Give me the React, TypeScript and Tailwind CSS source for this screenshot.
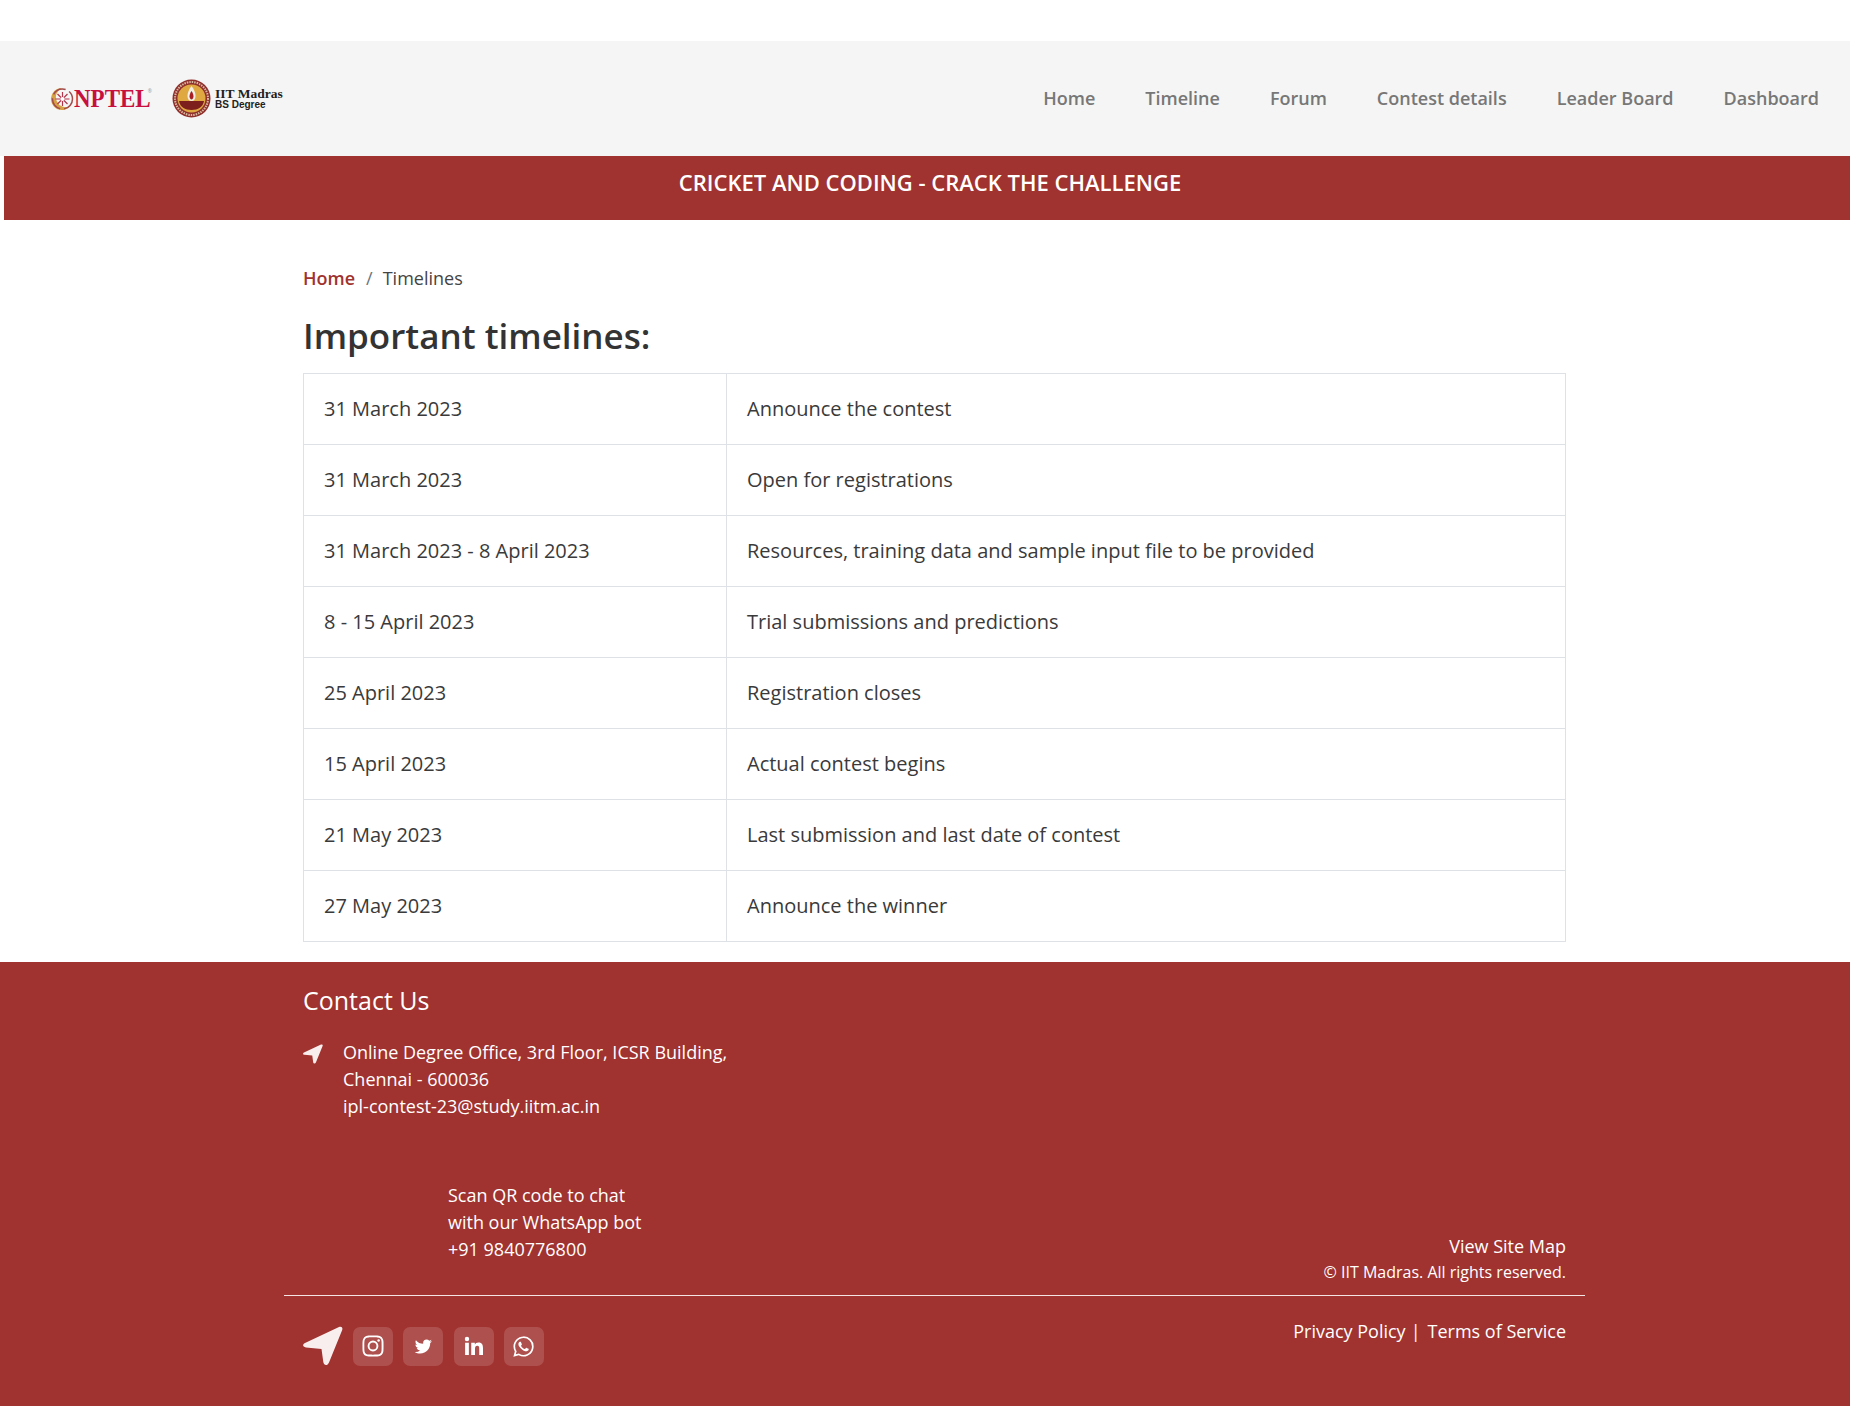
import React from 'react';
import {
  BiLogoInstagram,
  BiLogoTwitter,
  BiLogoLinkedin,
  BiLogoWhatsapp,
} from 'react-icons/bi';

const rows = [
  ['31 March 2023', 'Announce the contest'],
  ['31 March 2023', 'Open for registrations'],
  ['31 March 2023 - 8 April 2023', 'Resources, training data and sample input file to be provided'],
  ['8 - 15 April 2023', 'Trial submissions and predictions'],
  ['25 April 2023', 'Registration closes'],
  ['15 April 2023', 'Actual contest begins'],
  ['21 May 2023', 'Last submission and last date of contest'],
  ['27 May 2023', 'Announce the winner'],
];

const navLinks = ['Home', 'Timeline', 'Forum', 'Contest details', 'Leader Board', 'Dashboard'];

const socials = [
  { icon: BiLogoInstagram, size: 'h-[28px] w-[28px]' },
  { icon: BiLogoTwitter, size: 'h-[21px] w-[21px]' },
  { icon: BiLogoLinkedin, size: 'h-[24px] w-[24px]' },
  { icon: BiLogoWhatsapp, size: 'h-[27px] w-[27px]' },
];

function NavArrow({ className }: { className: string }) {
  return (
    <svg viewBox="0 0 40 40" className={className} fill="currentColor">
      <path d="M36 1C38.500.2 40 1.500 39.200 4L26 36.500C24.500 40 21 40 20.300 36L18.500 23 3 21.500C-.5 21-.8 18.500 2 17Z" />
    </svg>
  );
}

function NptelMark() {
  return (
    <svg width="24" height="24" viewBox="0 0 24 24" className="shrink-0">
      <path d="M12 1a11 11 0 1 0 8 18.500A10 10 0 1 1 12 1z" fill="#d6a045" />
      <circle cx="12.500" cy="12" r="10" fill="none" stroke="#a34a4a" strokeWidth="1.500" strokeDasharray="14 4" />
      <g stroke="#b5354a" strokeWidth="1.200">
        <path d="M12.500 5v14M5.500 12h14M7.500 7l10 10M17.500 7l-10 10" />
      </g>
      <circle cx="12.500" cy="12" r="2" fill="#fff" />
    </svg>
  );
}

function IitmMark() {
  return (
    <svg width="39" height="39" viewBox="0 0 39 39" className="shrink-0">
      <circle cx="19.500" cy="19.500" r="19" fill="#8f2f2c" />
      <circle cx="19.500" cy="19.500" r="16.500" fill="none" stroke="#d9b8a0" strokeWidth="2" strokeDasharray="1.500 1" />
      <circle cx="19.500" cy="19.500" r="14" fill="#dfa841" />
      <path d="M7 22h25c-1 6-6 9-12.500 9S8 28 7 22z" fill="#7d1f1c" />
      <path d="M19.500 7c3 4 4 7 4 10s-1.500 5-4 5-4-2-4-5 1-6 4-10z" fill="#f4efe4" />
      <path d="M19.500 12c1.500 2 2 4 2 5.500s-1 3-2 3-2-1.500-2-3 .5-3.500 2-5.500z" fill="#a81e22" />
    </svg>
  );
}

function App() {
  return (
    <div className="min-h-[1425px] bg-white pt-[41px] font-['Open_Sans',sans-serif] text-[#3a3a3a]">
      {/* Header */}
      <header className="flex h-[115px] items-center justify-between bg-[#f5f5f5] pl-[50px] pr-[31px]">
        <div className="flex items-center">
          <div className="relative flex w-[100px] items-center">
            <NptelMark />
            <span className="inline-block scale-y-[1.12] font-['Liberation_Serif',serif] text-[23px] font-bold leading-none text-[#c8103e]">NPTEL</span>
            <span className="absolute right-[-2px] top-[2px] text-[5px] leading-none text-[#999]">®</span>
          </div>
          <div className="ml-[22px] flex items-center">
            <IitmMark />
            <div className="ml-[4px] flex flex-col">
              <span className="font-['Liberation_Serif',serif] text-[13.500px] font-bold leading-[13px] text-[#222]">IIT Madras</span>
              <span className="font-['Liberation_Sans',sans-serif] text-[10px] font-bold leading-[10px] text-[#222]">BS Degree</span>
            </div>
          </div>
        </div>
        <nav className="flex items-center gap-[50px]">
          {navLinks.map((link) => (
            <a key={link} href="#" className="text-[18px] font-semibold text-[#777]">
              {link}
            </a>
          ))}
        </nav>
      </header>

      {/* Banner */}
      <div className="ml-[4px] h-[64px] bg-[#a0322f] pl-[6px] pt-[10px] text-center text-[22px] font-semibold text-white">
        CRICKET AND CODING - CRACK THE CHALLENGE
      </div>

      <main className="ml-[303px] w-[1263px]">
        <div className="flex items-center pt-[45px] text-[18px] leading-[27px]">
          <a href="#" className="font-semibold text-[#a0322f]">Home</a>
          <span className="ml-[11px] mr-[10px] text-[#6c757d]">/</span>
          <span className="text-[#444]">Timelines</span>
        </div>
        <h1 className="mt-[22px] text-[35px] font-semibold leading-[43px] text-[#333]">Important timelines:</h1>
        <table className="mt-[16px] w-full table-fixed border-collapse text-[20px]">
          <colgroup>
            <col className="w-[423px]" />
            <col />
          </colgroup>
          <tbody>
            {rows.map((row, index) => (
              <tr key={index} className="h-[71px]">
                <td className="border border-[#dee2e6] px-[20px] py-0">{row[0]}</td>
                <td className="border border-[#dee2e6] px-[20px] py-0">{row[1]}</td>
              </tr>
            ))}
          </tbody>
        </table>
      </main>

      {/* Footer */}
      <footer className="mt-[20px] h-[444px] bg-[#a0322f] text-white">
        <div className="ml-[284px] w-[1301px] px-[19px]">
          <h3 className="pt-[19px] text-[25px] leading-[38px]">Contact Us</h3>
          <div className="mt-[20px] flex text-[18px] leading-[27px]">
            <NavArrow className="mt-[5px] h-[20px] w-[20px] text-[#f8eeee]" />
            <div className="ml-[20px]">
              Online Degree Office, 3rd Floor, ICSR Building,<br />
              Chennai - 600036<br />
              ipl-contest-23@study.iitm.ac.in
            </div>
          </div>
          <div className="mt-[62px] flex items-end justify-between text-[18px] leading-[27px]">
            <div className="mb-[24px] ml-[145px]">
              Scan QR code to chat<br />
              with our WhatsApp bot<br />
              +91 9840776800
            </div>
            <div className="mb-[2px] text-right">
              <div>View Site Map</div>
              <div className="text-[16px] leading-[25px]">© IIT Madras. All rights reserved.</div>
            </div>
          </div>
        </div>
        <div className="ml-[284px] mt-[8px] w-[1301px] border-t border-[#f4e4e4] px-[19px]">
          <div className="flex items-start justify-between pt-[30px]">
            <div className="flex items-center">
              <NavArrow className="h-[40px] w-[40px] text-[#f8eeee]" />
              <div className="ml-[10px] flex gap-[10.300px]">
                {socials.map((s, index) => (
                  <a key={index} href="#" className="flex h-[39px] w-[40px] items-center justify-center rounded-[7px] bg-white/15">
                    <s.icon className={`${s.size} text-white`} />
                  </a>
                ))}
              </div>
            </div>
            <div className="-mt-[8px] flex items-center text-[18px] leading-[27px]">
              Privacy Policy <span className="ml-[5px] mr-[7px]">|</span> Terms of Service
            </div>
          </div>
        </div>
      </footer>
    </div>
  );
}

export default App;
